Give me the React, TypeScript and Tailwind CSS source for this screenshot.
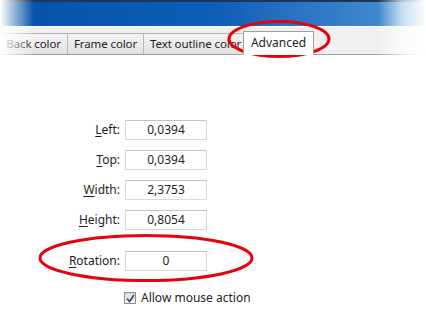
import React from "react";

const font = { fontFamily: '"Noto Sans", "Open Sans", Arial, sans-serif' };

function Field({ label, hot, value }: { label: string; hot: string; value: string }) {
  const rest = label.slice(1);
  return (
    <div className="flex items-center">
      <div className="w-[121px] text-right pr-[1px] text-[12px] text-[#1e1e1e]">
        <span className="underline underline-offset-2">{hot}</span>
        {rest}
      </div>
      <div className="ml-[4px] w-[82px] h-[20px] border border-[#d9d9d9] border-t-[#c4c4c4] bg-white flex items-center justify-center text-[12px] text-[#1e1e1e]">
        {value}
      </div>
    </div>
  );
}

function Tab({ label, w }: { label: string; w: string }) {
  return (
    <div className={"h-[21px] shrink-0 px-[6px] border border-[#b5b5b5] border-b-0 bg-gradient-to-b from-[#f4f4f4] to-[#e1e1e1] flex items-center text-[11.5px] tracking-[-0.1px] text-[#1e1e1e] -mr-[1px] overflow-hidden whitespace-nowrap " + w}>
      {label}
    </div>
  );
}

export default function App() {
  return (
    <div className="relative w-[426px] h-[324px] bg-white overflow-hidden" style={font}>
      {/* title bar */}
      <div className="h-[26px] border-t-2 border-[#1c3558] bg-gradient-to-r from-[#0452a8] via-[#0c5eb6] to-[#4c94d6]" />
      <div className="h-[1px] bg-white" />
      {/* tab strip */}
      <div className="h-[28px] bg-[#f0f0f0] border-b border-[#a0a0a0] flex items-end">
        <div className="flex items-end">
          <div className="w-[68px] shrink-0 h-[21px] px-[6px] border border-[#b5b5b5] border-b-0 border-l-0 bg-gradient-to-b from-[#f4f4f4] to-[#e1e1e1] flex items-center justify-end text-[11.5px] tracking-[-0.1px] text-[#1e1e1e] -mr-[1px] whitespace-nowrap overflow-hidden">
            Back color
          </div>
          <Tab label="Frame color" w="w-[77px] justify-center" />
          <Tab label="Text outline color" w="w-[104px]" />
          <div className="w-[71px] shrink-0 h-[24px] -mb-[1px] -ml-[3px] bg-white border border-[#a0a0a0] border-b-white flex items-center justify-center text-[12px] text-[#1e1e1e] z-10">
            Advanced
          </div>
        </div>
      </div>

      {/* fields */}
      <div className="flex flex-col pt-[65px]">
        <div className="flex flex-col gap-[10px]">
          <Field label="Left:" hot="L" value="0,0394" />
          <Field label="Top:" hot="T" value="0,0394" />
          <Field label="Width:" hot="W" value="2,3753" />
          <Field label="Height:" hot="H" value="0,8054" />
        </div>
        <div className="mt-[21px]">
          <Field label="Rotation:" hot="R" value="0" />
        </div>
        <div className="mt-[18px] ml-[124px] flex items-center gap-[5px] text-[12px] text-[#1e1e1e]">
          <div className="w-[12px] h-[12px] border border-[#8e8f8f] bg-gradient-to-b from-[#dcdcdc] to-[#f6f6f6] flex items-center justify-center">
            <svg width="9" height="9" viewBox="0 0 9 9">
              <path d="M1 4.5 L3.5 7.5 L8 1" fill="none" stroke="#3c4f7a" strokeWidth="1.8" />
            </svg>
          </div>
          <span>Allow mouse action</span>
        </div>
      </div>

      {/* edge fades */}
      <div className="absolute left-0 top-0 h-full w-[34px] bg-gradient-to-r from-white to-transparent" />
      <div className="absolute right-0 top-0 h-full w-[48px] bg-gradient-to-l from-white via-white/70 to-transparent" />

      {/* red annotations */}
      <svg className="absolute left-0 top-0" width="426" height="324">
        <ellipse cx="279" cy="39" rx="50" ry="17.5" fill="none" stroke="#e8000b" strokeWidth="3" />
        <ellipse cx="146" cy="258" rx="106" ry="22.5" fill="none" stroke="#e8000b" strokeWidth="3" />
      </svg>
    </div>
  );
}
